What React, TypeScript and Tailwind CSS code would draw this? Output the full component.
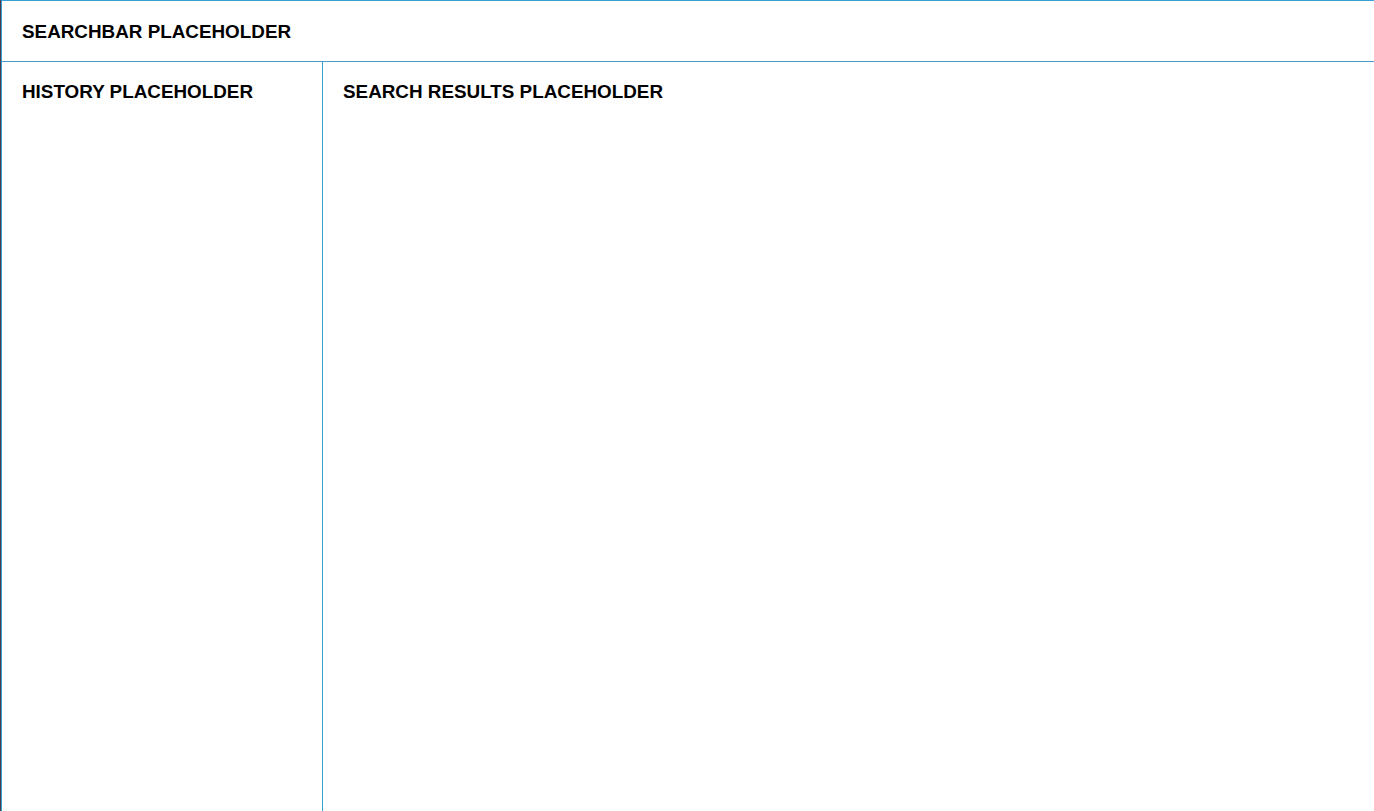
export default function App() {
  return (
    <div className="h-[811px] w-full border-l border-[#4d3a4c] bg-white" style={{ fontFamily: '"Liberation Sans", Arial, sans-serif' }}>
      <div className="flex h-full flex-col border-l border-t border-[#36a0d2]">
        {/* Searchbar */}
        <header className="h-[61px] shrink-0 border-b border-[#4a9cc6] px-5 pt-5">
          <h3 className="text-[18.85px] font-bold leading-[21.5px] text-black">SEARCHBAR PLACEHOLDER</h3>
        </header>

        <div className="flex min-h-0 flex-1">
          {/* History */}
          <aside className="w-[321px] shrink-0 border-r border-[#36a0d2] px-5 pt-[19px]">
            <h3 className="text-[18.85px] font-bold leading-[21.5px] text-black">HISTORY PLACEHOLDER</h3>
          </aside>

          {/* Results */}
          <main className="flex-1 px-5 pt-[19px]">
            <h3 className="text-[18.85px] font-bold leading-[21.5px] text-black">SEARCH RESULTS PLACEHOLDER</h3>
          </main>
        </div>
      </div>
    </div>
  );
}
